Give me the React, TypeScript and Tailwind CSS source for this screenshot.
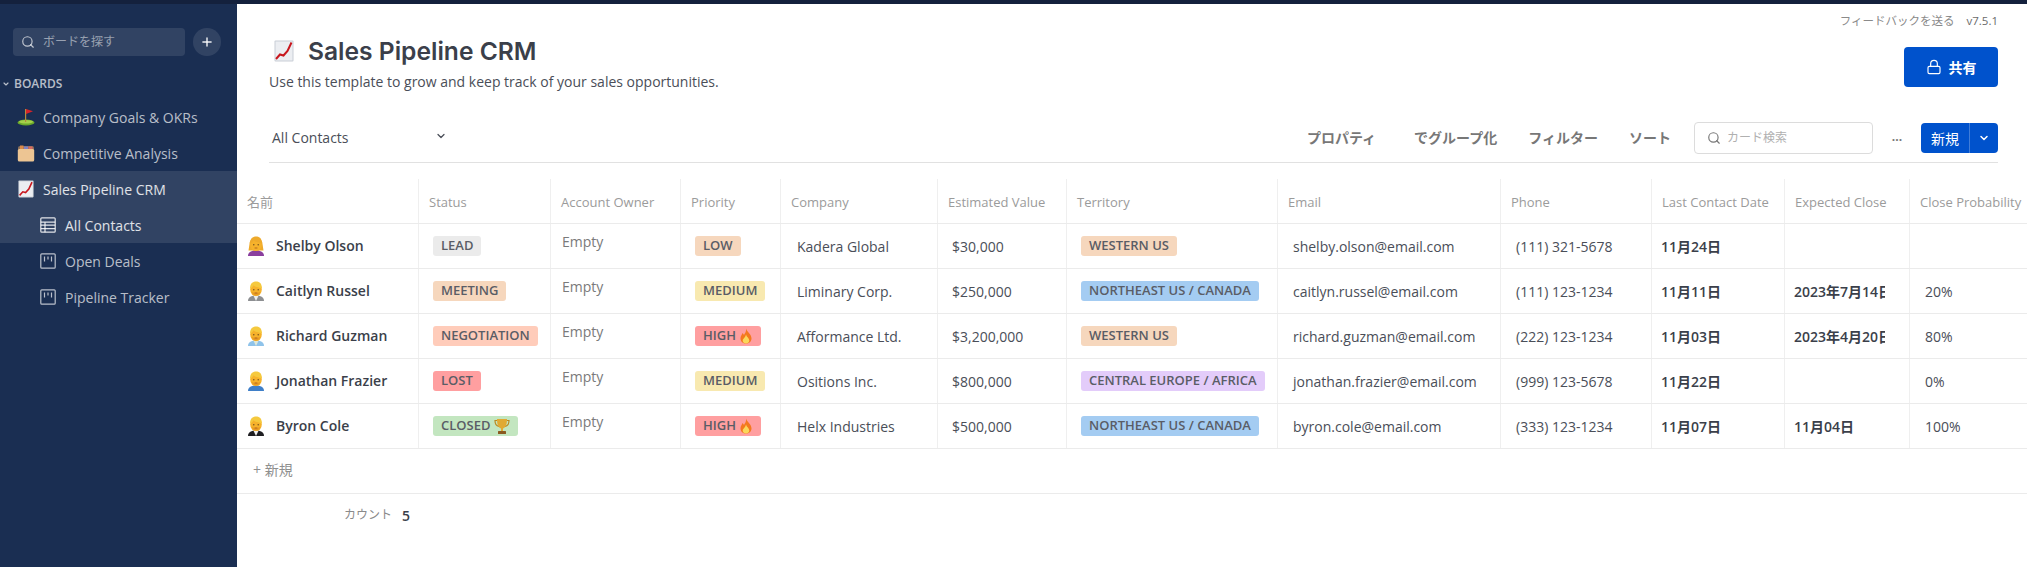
import { Search, Plus, ChevronDown, Lock } from "lucide-react";

const FONT = "font-['Open_Sans','Noto_Sans_CJK_JP',sans-serif]";

const ChartEmoji = ({ className }: { className: string }) => (
  <svg viewBox="0 0 20 22" className={className}>
    <rect x="0.5" y="0.5" width="19" height="21" rx="1" fill="#c9ced6" />
    <rect x="1.5" y="1.5" width="17" height="19" fill="#eceef2" />
    <path d="M2 19 L6 14.5 L9.5 15.5 L13.5 11 L17.5 2.5" fill="none" stroke="#c8171e" strokeWidth="2" />
  </svg>
);

const FlagEmoji = () => (
  <svg viewBox="0 0 18 18" className="h-[18px] w-[18px]">
    <ellipse cx="9" cy="14.5" rx="8.5" ry="3" fill="#6aa82a" />
    <ellipse cx="9" cy="13.8" rx="7" ry="1.8" fill="#a4d04a" />
    <rect x="8" y="1" width="1.2" height="13" fill="#b58a3c" />
    <path d="M9 1 L16 3.2 L9 6 Z" fill="#d8232a" />
  </svg>
);

const BoxEmoji = () => (
  <svg viewBox="0 0 18 18" className="h-[18px] w-[18px]">
    <path d="M1 4 Q1 2 3 2 L15 2 Q17 2 17 4 L17 6 L1 6 Z" fill="#8a6f5a" />
    <rect x="3" y="1.5" width="3.5" height="4" fill="#d98a4a" />
    <rect x="7" y="2.5" width="4" height="3" fill="#7d82c4" />
    <rect x="11.5" y="2.5" width="4" height="3" fill="#d76a62" />
    <rect x="0.8" y="5" width="16.4" height="12.5" rx="1.5" fill="#edc593" />
  </svg>
);

const FireEmoji = () => (
  <svg viewBox="0 0 14 16" className="ml-[3px] h-[16px] w-[14px]">
    <path d="M7 0.5 C8 4 12.5 6 12.5 10.5 C12.5 13.5 10 15.5 7 15.5 C4 15.5 1.5 13.5 1.5 10.5 C1.5 8 3 7 3.5 5 C4.5 6 5 7 5 7 C6 5 7.5 3.5 7 0.5 Z" fill="#f4791f" />
    <path d="M7 6.5 C7.5 9 10.3 10.3 10.3 12.5 C10.3 14.2 8.7 15.5 7 15.5 C5.3 15.5 3.7 14.2 3.7 12.5 C3.7 10.8 6.5 9.5 7 6.5 Z" fill="#fbd75b" />
  </svg>
);

const TrophyEmoji = () => (
  <svg viewBox="0 0 16 17" className="ml-[4px] h-[17px] w-[16px]">
    <path d="M3 2.5 H1 C1 6 2.5 8 5 8.5 M13 2.5 H15 C15 6 13.5 8 11 8.5" fill="none" stroke="#b9881f" strokeWidth="1.2" />
    <path d="M3 1 H13 C13 6 12 9.5 9 10.5 V13 H7 V10.5 C4 9.5 3 6 3 1 Z" fill="#e0aa33" />
    <rect x="4" y="13" width="8" height="3" rx="0.5" fill="#8a5a20" />
  </svg>
);

type Look = { top: string; accent?: string; woman?: boolean };

const PersonEmoji = ({ top, accent, woman }: Look) => (
  <svg viewBox="0 0 18 20" className="h-[20px] w-[18px] shrink-0">
    {woman && <path d="M2.5 8 C2.5 0 15.5 0 15.5 8 L16.5 14.5 L1.5 14.5 Z" fill="#eeaa2c" />}
    <path d="M1 20 C1 16 4.5 14.5 9 14.5 C13.5 14.5 17 16 17 20 Z" fill={top} />
    {accent && <path d="M6.5 14.8 L9 20 L11.5 14.8 Z" fill={accent} />}
    <ellipse cx="9" cy="8.5" rx="5.8" ry="6.6" fill="#f6b22b" />
    {!woman && <path d="M4.5 11 C6 15.5 12 15.5 13.5 11 C12 12 6 12 4.5 11 Z" fill="#e89a24" />}
    <path d="M3.2 7.5 C2.8 2 6.5 0.5 9 0.5 C12 0.5 15.2 2 14.8 7.5 C13 6.5 8 6 6.5 4.2 C6 5.5 5 6.8 3.2 7.5 Z" fill={woman ? "#eeaa2c" : "#f5c93e"} />
    <circle cx="6.8" cy="8.8" r="0.7" fill="#6b4a1c" />
    <circle cx="11.2" cy="8.8" r="0.7" fill="#6b4a1c" />
    <rect x="7.6" y="11.6" width="2.8" height="0.8" fill="#a8581f" />
  </svg>
);

const TableIcon = ({ className }: { className: string }) => (
  <svg viewBox="0 0 16 16" className={className} fill="none" stroke="currentColor" strokeWidth="1.2">
    <rect x="0.8" y="0.8" width="14.4" height="14.4" rx="1" />
    <path d="M0.8 5.2 H15.2 M0.8 8.2 H15.2 M0.8 11.6 H15.2" />
    <path d="M5 5.2 V15.2" />
  </svg>
);

const BoardIcon = ({ className }: { className: string }) => (
  <svg viewBox="0 0 16 16" className={className} fill="none" stroke="currentColor" strokeWidth="1.2">
    <rect x="0.8" y="0.8" width="14.4" height="14.4" rx="1" />
    <path d="M4.5 3.5 V8.5 M8 3.5 V6.5 M11.5 3.5 V8.5" />
  </svg>
);

const tagColors = {
  gray: "bg-[#ebebeb]",
  peach: "bg-[#f6d7bd]",
  salmon: "bg-[#ffccba]",
  red: "bg-[#ff9fa0]",
  yellow: "bg-[#f8e9b0]",
  green: "bg-[#c3e6c0]",
  blue: "bg-[#a4ccf2]",
  purple: "bg-[#e3ccfa]",
};

type TagColor = keyof typeof tagColors;

const Tag = ({ color, label, fire, trophy }: { color: TagColor; label: string; fire?: boolean; trophy?: boolean }) => (
  <span className={`flex h-[20px] items-center rounded-[3px] px-[8px] text-[13px] font-semibold text-[#5a5d66] ${tagColors[color]}`}>
    {label}
    {fire && <FireEmoji />}
    {trophy && <TrophyEmoji />}
  </span>
);

const columns = ["w-[182px]", "w-[132px]", "w-[130px]", "w-[100px]", "w-[157px]", "w-[129px]", "w-[211px]", "w-[223px]", "w-[151px]", "w-[133px]", "w-[125px]", "w-[130px]"];
const headers = ["名前", "Status", "Account Owner", "Priority", "Company", "Estimated Value", "Territory", "Email", "Phone", "Last Contact Date", "Expected Close", "Close Probability"];

const contacts: {
  name: string;
  look: Look;
  status: [TagColor, string];
  trophy?: boolean;
  priority: [TagColor, string];
  fire?: boolean;
  company: string;
  value: string;
  territory: [TagColor, string];
  email: string;
  phone: string;
  last: string;
  expected: string;
  prob: string;
}[] = [
  { name: "Shelby Olson", look: { top: "#8a3f9e", woman: true }, status: ["gray", "LEAD"], priority: ["peach", "LOW"], company: "Kadera Global", value: "$30,000", territory: ["peach", "WESTERN US"], email: "shelby.olson@email.com", phone: "(111) 321-5678", last: "11月24日", expected: "", prob: "" },
  { name: "Caitlyn Russel", look: { top: "#8d8f92", accent: "#eeeeee" }, status: ["peach", "MEETING"], priority: ["yellow", "MEDIUM"], company: "Liminary Corp.", value: "$250,000", territory: ["blue", "NORTHEAST US / CANADA"], email: "caitlyn.russel@email.com", phone: "(111) 123-1234", last: "11月11日", expected: "2023年7月14日", prob: "20%" },
  { name: "Richard Guzman", look: { top: "#8fc3ea", accent: "#e0e8d8" }, status: ["salmon", "NEGOTIATION"], priority: ["red", "HIGH"], fire: true, company: "Afformance Ltd.", value: "$3,200,000", territory: ["peach", "WESTERN US"], email: "richard.guzman@email.com", phone: "(222) 123-1234", last: "11月03日", expected: "2023年4月20日", prob: "80%" },
  { name: "Jonathan Frazier", look: { top: "#3f7fc8" }, status: ["red", "LOST"], priority: ["yellow", "MEDIUM"], company: "Ositions Inc.", value: "$800,000", territory: ["purple", "CENTRAL EUROPE / AFRICA"], email: "jonathan.frazier@email.com", phone: "(999) 123-5678", last: "11月22日", expected: "", prob: "0%" },
  { name: "Byron Cole", look: { top: "#1f1f22", accent: "#f2f2f2" }, status: ["green", "CLOSED"], trophy: true, priority: ["red", "HIGH"], fire: true, company: "Helx Industries", value: "$500,000", territory: ["blue", "NORTHEAST US / CANADA"], email: "byron.cole@email.com", phone: "(333) 123-1234", last: "11月07日", expected: "11月04日", prob: "100%" },
];

const Cell = ({ col, children, className = "" }: { col: number; children?: React.ReactNode; className?: string }) => (
  <div className={`flex shrink-0 overflow-hidden whitespace-nowrap border-r border-[#efefef] ${columns[col]} ${className}`}>
    {children}
  </div>
);

const App = () => {
  const boards = [
    { icon: <FlagEmoji />, label: "Company Goals & OKRs" },
    { icon: <BoxEmoji />, label: "Competitive Analysis" },
  ];

  return (
    <div className={`flex h-screen w-screen flex-col overflow-hidden bg-white ${FONT}`}>
      <div className="h-[4px] shrink-0 bg-[#14213d]" />
      <div className="flex min-h-0 flex-1">
        {/* Sidebar */}
        <aside className="w-[237px] shrink-0 bg-[#1a2e52] pt-[24px] text-[14px] text-white/70">
          <div className="flex items-center gap-[8px] pl-[13px]">
            <div className="flex h-[28px] w-[172px] items-center rounded-[4px] bg-white/10 pl-[8px] text-[12px] text-white/50">
              <Search className="h-[14px] w-[14px] text-white/70" />
              <span className="ml-[8px]">ボードを探す</span>
            </div>
            <div className="flex h-[28px] w-[28px] items-center justify-center rounded-full bg-white/10">
              <Plus className="h-[14px] w-[14px] text-white/90" strokeWidth={2.5} />
            </div>
          </div>
          <div className="mt-[16px] flex h-[23px] items-center pl-[2px] text-[12px] font-semibold text-white/70">
            <ChevronDown className="h-[8px] w-[8px]" strokeWidth={3.5} />
            <span className="ml-[4px]">BOARDS</span>
          </div>
          <div className="mt-[4px]">
            {boards.map((board) => (
              <div key={board.label} className="flex h-[36px] items-center pl-[17px]">
                {board.icon}
                <span className="ml-[8px]">{board.label}</span>
              </div>
            ))}
            <div className="bg-white/10 text-white/85">
              <div className="flex h-[36px] items-center pl-[18px]">
                <ChartEmoji className="h-[18px] w-[16px]" />
                <span className="ml-[9px]">Sales Pipeline CRM</span>
              </div>
              <div className="flex h-[36px] items-center pl-[40px]">
                <TableIcon className="h-[16px] w-[16px]" />
                <span className="ml-[9px]">All Contacts</span>
              </div>
            </div>
            <div className="flex h-[36px] items-center pl-[40px]">
              <BoardIcon className="h-[16px] w-[16px]" />
              <span className="ml-[9px]">Open Deals</span>
            </div>
            <div className="flex h-[36px] items-center pl-[40px]">
              <BoardIcon className="h-[16px] w-[16px]" />
              <span className="ml-[9px]">Pipeline Tracker</span>
            </div>
          </div>
        </aside>

        {/* Main content */}
        <main className="min-w-0 flex-1 text-[#4a4e58]">
          <div className="pl-[32px] pr-[29px]">
            <div className="flex h-[31px] items-center justify-end pt-[3px] text-[11.5px]">
              <span className="text-[#8a8a8a]">フィードバックを送る</span>
              <span className="ml-[12px] text-[#6b6b6b]">v7.5.1</span>
            </div>
            <div className="flex h-[57px] justify-between">
              <div>
                <div className="flex h-[32px] items-center pl-[5px]">
                  <ChartEmoji className="h-[22px] w-[20px]" />
                  <h1 className="ml-[14px] font-['Inter',sans-serif] text-[24.6px] font-semibold text-[#3b3f4a]">Sales Pipeline CRM</h1>
                </div>
                <p className="mt-[5px] text-[14px] leading-[19px]">Use this template to grow and keep track of your sales opportunities.</p>
              </div>
              <button className="mt-[12px] flex h-[40px] w-[94px] items-center justify-center rounded-[4px] bg-[#0052cc] text-[14px] font-semibold text-white">
                <Lock className="h-[16px] w-[16px]" strokeWidth={1.75} />
                <span className="ml-[7px]">共有</span>
              </button>
            </div>

            <div className="mt-[30px] flex h-[41px] items-start border-b border-[#e1e1e1] pb-[8px]">
              <div className="flex h-[32px] w-[181px] items-center justify-between pb-[2px] pl-[3px] pr-[3px] text-[14px]">
                <span>All Contacts</span>
                <ChevronDown className="-mt-[2px] h-[12px] w-[12px]" strokeWidth={2.5} />
              </div>
              <div className="ml-auto flex items-center">
                <div className="-mt-[2px] flex text-[14px] font-semibold text-[#777777]">
                  <span>プロパティ</span>
                  <span className="ml-[38px]">でグループ化</span>
                  <span className="ml-[31px]">フィルター</span>
                  <span className="ml-[31px]">ソート</span>
                </div>
                <div className="ml-[23px] flex h-[32px] w-[179px] items-center rounded-[4px] border border-[#dcdcdc] pl-[12px] text-[12px] text-[#b0b0b0]">
                  <Search className="h-[14px] w-[14px] text-[#777777]" />
                  <span className="ml-[6px]">カード検索</span>
                </div>
                <div className="-mt-[2px] flex w-[48px] justify-center text-[12px] font-bold leading-none text-[#777777]">...</div>
                <div className="flex h-[30px] w-[77px] items-center rounded-[4px] bg-[#0052cc] text-[14px] text-white">
                  <span className="w-[48px] text-center">新規</span>
                  <span className="flex h-full flex-1 items-center justify-center border-l border-white/25">
                    <ChevronDown className="h-[12px] w-[12px]" strokeWidth={3} />
                  </span>
                </div>
              </div>
            </div>
          </div>

          {/* Table */}
          <div className="mt-[16px] w-[2000px] text-[14px]">
            <div className="flex h-[45px] border-b border-[#ebebeb]">
              {headers.map((header, i) => (
                <Cell key={header} col={i} className="items-center pl-[10px] pt-[3px] text-[13px] text-[#9b9b9b]">
                  {header}
                </Cell>
              ))}
            </div>
            {contacts.map((c) => (
              <div key={c.name} className="flex h-[45px] border-b border-[#ebebeb]">
                <Cell col={0} className="items-center pl-[10px] font-semibold text-[#3b3f4a]">
                  <PersonEmoji {...c.look} />
                  <span className="mb-[2px] ml-[11px]">{c.name}</span>
                </Cell>
                <Cell col={1} className="items-center pl-[14px]">
                  <Tag color={c.status[0]} label={c.status[1]} trophy={c.trophy} />
                </Cell>
                <Cell col={2} className="items-start pl-[11px] pt-[7px] text-[#7a7a7a]">
                  Empty
                </Cell>
                <Cell col={3} className="items-center pl-[14px]">
                  <Tag color={c.priority[0]} label={c.priority[1]} fire={c.fire} />
                </Cell>
                <Cell col={4} className="items-center pl-[16px] pt-[1px]">{c.company}</Cell>
                <Cell col={5} className="items-center pl-[14px] pt-[1px]">{c.value}</Cell>
                <Cell col={6} className="items-center pl-[14px]">
                  <Tag color={c.territory[0]} label={c.territory[1]} />
                </Cell>
                <Cell col={7} className="items-center pl-[15px] pt-[1px]">{c.email}</Cell>
                <Cell col={8} className="items-center pl-[15px] pt-[1px]">{c.phone}</Cell>
                <Cell col={9} className="items-center pl-[9px] pt-[1px] font-semibold text-[#3b3f4a]">{c.last}</Cell>
                <Cell col={10} className="items-center pl-[9px] pr-[24px] pt-[1px] font-semibold text-[#3b3f4a]">
                  <span className="overflow-hidden">{c.expected}</span>
                </Cell>
                <Cell col={11} className="items-center pl-[15px] pt-[1px]">{c.prob}</Cell>
              </div>
            ))}
            <div className="flex h-[45px] items-center border-b border-[#ebebeb] pb-[3px] pl-[16px] text-[#8f8f8f]">+ 新規</div>
            <div className="flex h-[42px] items-center pl-[107px]">
              <span className="text-[12px] text-[#8a8a8a]">カウント</span>
              <span className="ml-[10px] font-semibold text-[#3b3f4a]">5</span>
            </div>
          </div>
        </main>
      </div>
    </div>
  );
};

export default App;
